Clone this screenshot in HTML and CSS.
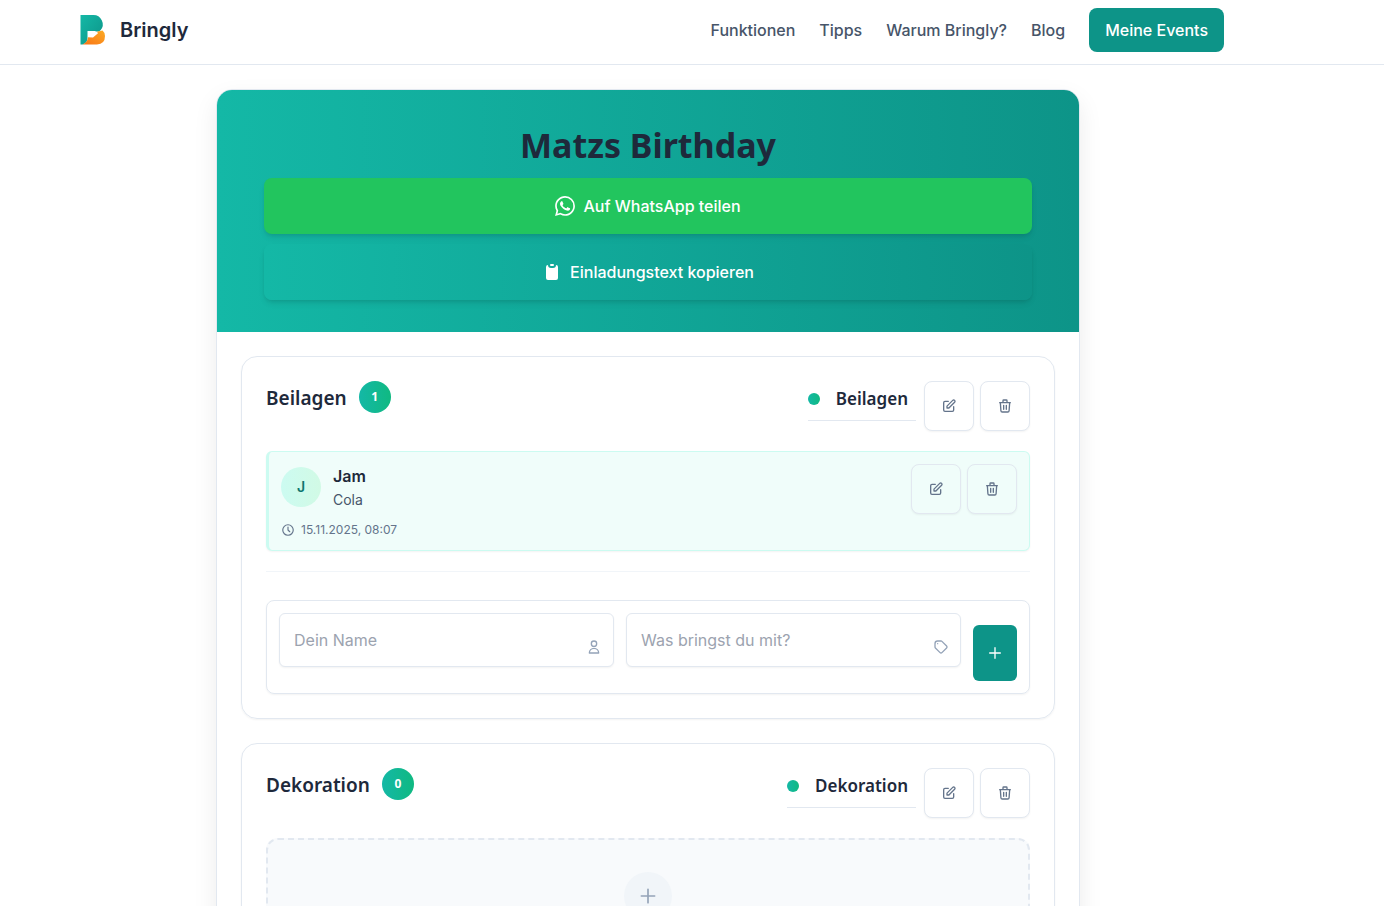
FILE: index.html
```html
<!DOCTYPE html>
<html lang="de">
<head>
<meta charset="utf-8">
<meta name="viewport" content="width=device-width, initial-scale=1">
<title>Bringly</title>
<link rel="stylesheet" href="styles.css">
</head>
<body>
<svg class="sprite" width="0" height="0" aria-hidden="true">
  <symbol id="edit" viewBox="0 0 24 24"><path d="M11 5H6a2 2 0 0 0-2 2v11a2 2 0 0 0 2 2h11a2 2 0 0 0 2-2v-5m-1.414-9.414a2 2 0 1 1 2.828 2.828L11.828 15H9v-2.828l8.586-8.586z"/></symbol>
  <symbol id="trash" viewBox="0 0 24 24"><path d="M19 7l-.867 12.142A2 2 0 0 1 16.138 21H7.862a2 2 0 0 1-1.995-1.858L5 7m5 4v6m4-6v6m1-10V4a1 1 0 0 0-1-1h-4a1 1 0 0 0-1 1v3M4 7h16"/></symbol>
  <symbol id="plus" viewBox="0 0 24 24"><path d="M12 4v16M4 12h16"/></symbol>
</svg>
<header class="site-header">
  <div class="site-header-inner">
    <a class="brand" href="#">
      <svg class="brand-logo" viewBox="0 0 40 40" aria-hidden="true">
        <defs>
          <linearGradient id="teal" x1="0" y1="0" x2="1" y2="1"><stop offset="0" stop-color="#14b8a6"/><stop offset="1" stop-color="#0d9488"/></linearGradient>
          <linearGradient id="orange" x1="0" y1="1" x2="1" y2="0"><stop offset="0" stop-color="#f97316"/><stop offset="1" stop-color="#fbab24"/></linearGradient>
        </defs>
        <path fill="url(#teal)" d="M8.500 5H21a9.300 9.300 0 0 1 7.500 15.300L27 21.500h-3l-1-.5h-7.500V28q0 5-5 6.500h-2z"/>
        <path fill="url(#orange)" d="M10.500 34.500q5-2 5.500-7.200l5 .2 5-4.200-1-1.600 5.500-1.200q2.500 2 2.500 5.500 0 8-8 8.500z"/>
      </svg>
      <span>Bringly</span>
    </a>
    <nav class="nav">
      <a href="#">Funktionen</a>
      <a href="#">Tipps</a>
      <a href="#">Warum Bringly?</a>
      <a href="#">Blog</a>
      <a class="nav-cta" href="#">Meine Events</a>
    </nav>
  </div>
</header>
<main class="page">
  <article class="event">
    <div class="hero">
      <div class="hero-inner">
        <h1>Matzs Birthday</h1>
        <button class="share share-whatsapp" type="button">
          <svg width="20" height="20" viewBox="0 0 24 24" fill="currentColor" aria-hidden="true"><path d="M17.472 14.382c-.297-.149-1.758-.867-2.030-.967-.273-.099-.471-.148-.67.150-.197.297-.767.966-.940 1.164-.173.199-.347.223-.644.075-.297-.150-1.255-.463-2.390-1.475-.883-.788-1.480-1.761-1.653-2.059-.173-.297-.018-.458.130-.606.134-.133.298-.347.446-.520.149-.174.198-.298.298-.497.099-.198.050-.371-.025-.520-.075-.149-.669-1.612-.916-2.207-.242-.579-.487-.500-.669-.510-.173-.008-.371-.010-.570-.010-.198 0-.520.074-.792.372-.272.297-1.040 1.016-1.040 2.479 0 1.462 1.065 2.875 1.213 3.074.149.198 2.096 3.200 5.077 4.487.709.306 1.262.489 1.694.625.712.227 1.360.195 1.871.118.571-.085 1.758-.719 2.006-1.413.248-.694.248-1.289.173-1.413-.074-.124-.272-.198-.570-.347m-5.421 7.403h-.004a9.870 9.870 0 0 1-5.031-1.378l-.361-.214-3.741.982.998-3.648-.235-.374a9.860 9.860 0 0 1-1.510-5.260c.001-5.450 4.436-9.884 9.888-9.884 2.640 0 5.122 1.030 6.988 2.898a9.825 9.825 0 0 1 2.893 6.994c-.003 5.450-4.437 9.884-9.885 9.884m8.413-18.297A11.815 11.815 0 0 0 12.050 0C5.495 0 .160 5.335.157 11.892c0 2.096.547 4.142 1.588 5.945L.057 24l6.305-1.654a11.882 11.882 0 0 0 5.683 1.448h.005c6.554 0 11.890-5.335 11.893-11.893a11.821 11.821 0 0 0-3.480-8.413z"/></svg>
          <span>Auf WhatsApp teilen</span>
        </button>
        <button class="share share-copy" type="button">
          <svg width="20" height="20" viewBox="0 0 20 20" fill="currentColor" aria-hidden="true"><path d="M8 3a1 1 0 0 1 1-1h2a1 1 0 1 1 0 2H9a1 1 0 0 1-1-1z"/><path d="M6 3a2 2 0 0 0-2 2v11a2 2 0 0 0 2 2h8a2 2 0 0 0 2-2V5a2 2 0 0 0-2-2 3 3 0 0 1-3 3H9a3 3 0 0 1-3-3z"/></svg>
          <span>Einladungstext kopieren</span>
        </button>
      </div>
    </div>
    <div class="event-body">
      <section class="category">
        <div class="category-head">
          <h2>Beilagen</h2>
          <span class="count">1</span>
          <h3><span class="dot"></span>Beilagen</h3>
          <div class="actions">
            <button class="icon-btn" type="button" aria-label="Bearbeiten"><svg><use href="#edit"/></svg></button>
            <button class="icon-btn" type="button" aria-label="Löschen"><svg><use href="#trash"/></svg></button>
          </div>
        </div>
        <div class="entry">
          <div class="entry-main">
            <div class="person">
              <span class="avatar">J</span>
              <div>
                <div class="person-name">Jam</div>
                <div class="person-item">Cola</div>
              </div>
            </div>
            <div class="entry-time">
              <svg viewBox="0 0 24 24" aria-hidden="true"><path d="M12 7v5l3 3m6-3a9 9 0 1 1-18 0 9 9 0 0 1 18 0z"/></svg>
              <time datetime="2025-11-15T08:07">15.11.2025, 08:07</time>
            </div>
          </div>
          <div class="actions">
            <button class="icon-btn" type="button" aria-label="Bearbeiten"><svg><use href="#edit"/></svg></button>
            <button class="icon-btn" type="button" aria-label="Löschen"><svg><use href="#trash"/></svg></button>
          </div>
        </div>
        <hr class="divider">
        <form class="add-form">
          <div class="field">
            <input type="text" placeholder="Dein Name" aria-label="Dein Name">
            <svg viewBox="0 0 24 24" aria-hidden="true"><path d="M16 7a4 4 0 1 1-8 0 4 4 0 0 1 8 0zM12 14a7 7 0 0 0-7 7h14a7 7 0 0 0-7-7z"/></svg>
          </div>
          <div class="field">
            <input type="text" placeholder="Was bringst du mit?" aria-label="Was bringst du mit?">
            <svg viewBox="0 0 24 24" aria-hidden="true"><path d="M7 7h.01M7 3h5c.512 0 1.024.195 1.414.586l7 7a2 2 0 0 1 0 2.828l-7 7a2 2 0 0 1-2.828 0l-7-7A1.994 1.994 0 0 1 3 12V7a4 4 0 0 1 4-4z"/></svg>
          </div>
          <button class="add-btn" type="submit" aria-label="Hinzufügen"><svg><use href="#plus"/></svg></button>
        </form>
      </section>
      <section class="category">
        <div class="category-head">
          <h2>Dekoration</h2>
          <span class="count">0</span>
          <h3><span class="dot"></span>Dekoration</h3>
          <div class="actions">
            <button class="icon-btn" type="button" aria-label="Bearbeiten"><svg><use href="#edit"/></svg></button>
            <button class="icon-btn" type="button" aria-label="Löschen"><svg><use href="#trash"/></svg></button>
          </div>
        </div>
        <div class="empty">
          <span class="empty-icon"><svg><use href="#plus"/></svg></span>
        </div>
      </section>
    </div>
  </article>
</main>
</body>
</html>
```
FILE: styles.css
```css
* { box-sizing: border-box; }

body {
  margin: 0;
  background: #fff;
  color: #1e293b;
  font: 16px/24px Inter, sans-serif;
}

h1, h2, h3 { margin: 0; font-family: "Segoe UI", "Noto Sans", sans-serif; }
a { color: inherit; text-decoration: none; }
button { font: inherit; cursor: pointer; }
svg { flex: none; display: block; }
.sprite { position: absolute; }

.icon-btn svg, .entry-time svg, .field svg, .add-btn svg, .empty-icon svg {
  fill: none;
  stroke: currentColor;
  stroke-width: 2;
  stroke-linecap: round;
  stroke-linejoin: round;
}

.site-header {
  padding: 8px 88px 12px 0;
  border-bottom: 1px solid #e2e8f0;
}
.site-header-inner {
  display: flex;
  align-items: center;
  justify-content: space-between;
  max-width: 1152px;
  margin: 0 auto;
}
.brand {
  display: flex;
  align-items: center;
  gap: 8px;
  font-size: 20px;
  font-weight: 600;
}
.brand-logo { width: 40px; height: 40px; }
.nav {
  display: flex;
  align-items: center;
  gap: 24px;
  color: #475569;
  font-weight: 500;
}
.nav-cta {
  padding: 10px 16px;
  border-radius: 8px;
  background: #0d9488;
  color: #fff;
}

.page { padding: 24px 88px 24px 0; }
.event {
  max-width: 864px;
  margin: 0 auto;
  border: 1px solid #e2e8f0;
  border-radius: 16px;
  overflow: hidden;
  box-shadow: 0 10px 25px rgba(0, 0, 0, 0.08);
}
.hero {
  padding: 32px 24px;
  background: linear-gradient(to right, #14b8a6, #0d9488);
}
.hero-inner {
  display: flex;
  flex-direction: column;
  gap: 10px;
  max-width: 768px;
  margin: 0 auto;
}
.hero h1 {
  font-size: 34px;
  line-height: 46px;
  font-weight: 700;
  text-align: center;
}
.share {
  display: flex;
  align-items: center;
  justify-content: center;
  gap: 8px;
  height: 56px;
  border: 0;
  border-radius: 8px;
  color: #fff;
  font-weight: 500;
  box-shadow: 0 4px 6px -1px rgba(0, 0, 0, 0.1), 0 2px 4px -2px rgba(0, 0, 0, 0.1);
}
.share-whatsapp { background: #22c55e; }
.share-copy { background: linear-gradient(to right, #14b8a6, #0d9488); }

.event-body {
  display: flex;
  flex-direction: column;
  gap: 24px;
  padding: 24px;
}
.category {
  padding: 24px;
  border: 1px solid #e2e8f0;
  border-radius: 16px;
  box-shadow: 0 1px 2px rgba(0, 0, 0, 0.05);
}
.category-head {
  display: flex;
  align-items: flex-start;
  margin-bottom: 20px;
}
.category-head h2 {
  font-size: 19px;
  line-height: 34px;
  font-weight: 600;
}
.count {
  display: grid;
  place-items: center;
  width: 32px;
  height: 32px;
  margin: 0 auto 0 12px;
  border-radius: 50%;
  background: linear-gradient(to right, #14b8a6, #10b981);
  color: #fff;
  font-family: "Segoe UI", "Noto Sans", sans-serif;
  font-size: 12px;
  font-weight: 700;
}
.category-head h3 {
  display: flex;
  align-items: center;
  gap: 16px;
  margin-right: 8px;
  padding: 4px 8px 8px 0;
  border-bottom: 1px solid #e2e8f0;
  font-size: 17px;
  line-height: 27px;
  font-weight: 600;
}
.dot {
  width: 12px;
  height: 12px;
  border-radius: 50%;
  background: linear-gradient(to right, #14b8a6, #10b981);
}
.actions { display: flex; gap: 6px; }
.icon-btn {
  display: grid;
  place-items: center;
  width: 50px;
  height: 50px;
  padding: 0;
  border: 1px solid #e2e8f0;
  border-radius: 8px;
  background: #fff;
  color: #64748b;
  box-shadow: 0 1px 2px rgba(0, 0, 0, 0.05);
}
.entry .icon-btn { background: #f0fdfa; }
.icon-btn svg { width: 16px; height: 16px; }

.entry {
  display: flex;
  justify-content: space-between;
  align-items: flex-start;
  padding: 12px;
  border: 1px solid #ccfbf1;
  border-left-width: 3px;
  border-radius: 6px;
  background: #f0fdfa;
  box-shadow: 0 1px 2px rgba(0, 0, 0, 0.05);
}
.person { display: flex; align-items: center; gap: 12px; }
.avatar {
  display: grid;
  place-items: center;
  width: 40px;
  height: 40px;
  border-radius: 50%;
  background: linear-gradient(to right, #ccfbf1, #d1fae5);
  color: #0f766e;
  font-size: 14px;
  font-weight: 600;
}
.person-name { font-weight: 600; }
.person-item {
  margin-top: 2px;
  color: #475569;
  font-size: 14px;
  line-height: 20px;
}
.entry-time {
  display: flex;
  align-items: center;
  gap: 6px;
  margin-top: 12px;
  color: #64748b;
  font-size: 12px;
  line-height: 16px;
}
.entry-time svg { width: 14px; height: 14px; }

.divider {
  margin: 20px 0 28px;
  border: 0;
  border-top: 1px solid #f1f5f9;
}
.add-form {
  display: grid;
  grid-template-columns: 1fr 1fr 44px;
  align-items: end;
  gap: 12px;
  padding: 12px;
  border: 1px solid #e2e8f0;
  border-radius: 8px;
  box-shadow: 0 1px 2px rgba(0, 0, 0, 0.05);
}
.field { position: relative; height: 68px; }
.field input {
  width: 100%;
  height: 54px;
  padding: 0 40px 0 14px;
  border: 1px solid #e2e8f0;
  border-radius: 6px;
  background: #fff;
  color: #1e293b;
  font: inherit;
  box-shadow: 0 1px 2px rgba(0, 0, 0, 0.05);
}
.field input::placeholder { color: #9ca3af; }
.field svg {
  position: absolute;
  top: 26px;
  right: 12px;
  width: 16px;
  height: 16px;
  color: #94a3b8;
}
.add-btn {
  display: grid;
  place-items: center;
  height: 56px;
  padding: 0;
  border: 0;
  border-radius: 6px;
  background: #0d9488;
  color: #fff;
}
.add-btn svg { width: 16px; height: 16px; }

.empty {
  display: grid;
  place-items: center;
  padding: 32px;
  border: 2px dashed #e2e8f0;
  border-radius: 12px;
  background: #f8fafc;
}
.empty-icon {
  display: grid;
  place-items: center;
  width: 48px;
  height: 48px;
  border-radius: 50%;
  background: #f1f5f9;
  color: #94a3b8;
}
.empty-icon svg { width: 20px; height: 20px; }
```
